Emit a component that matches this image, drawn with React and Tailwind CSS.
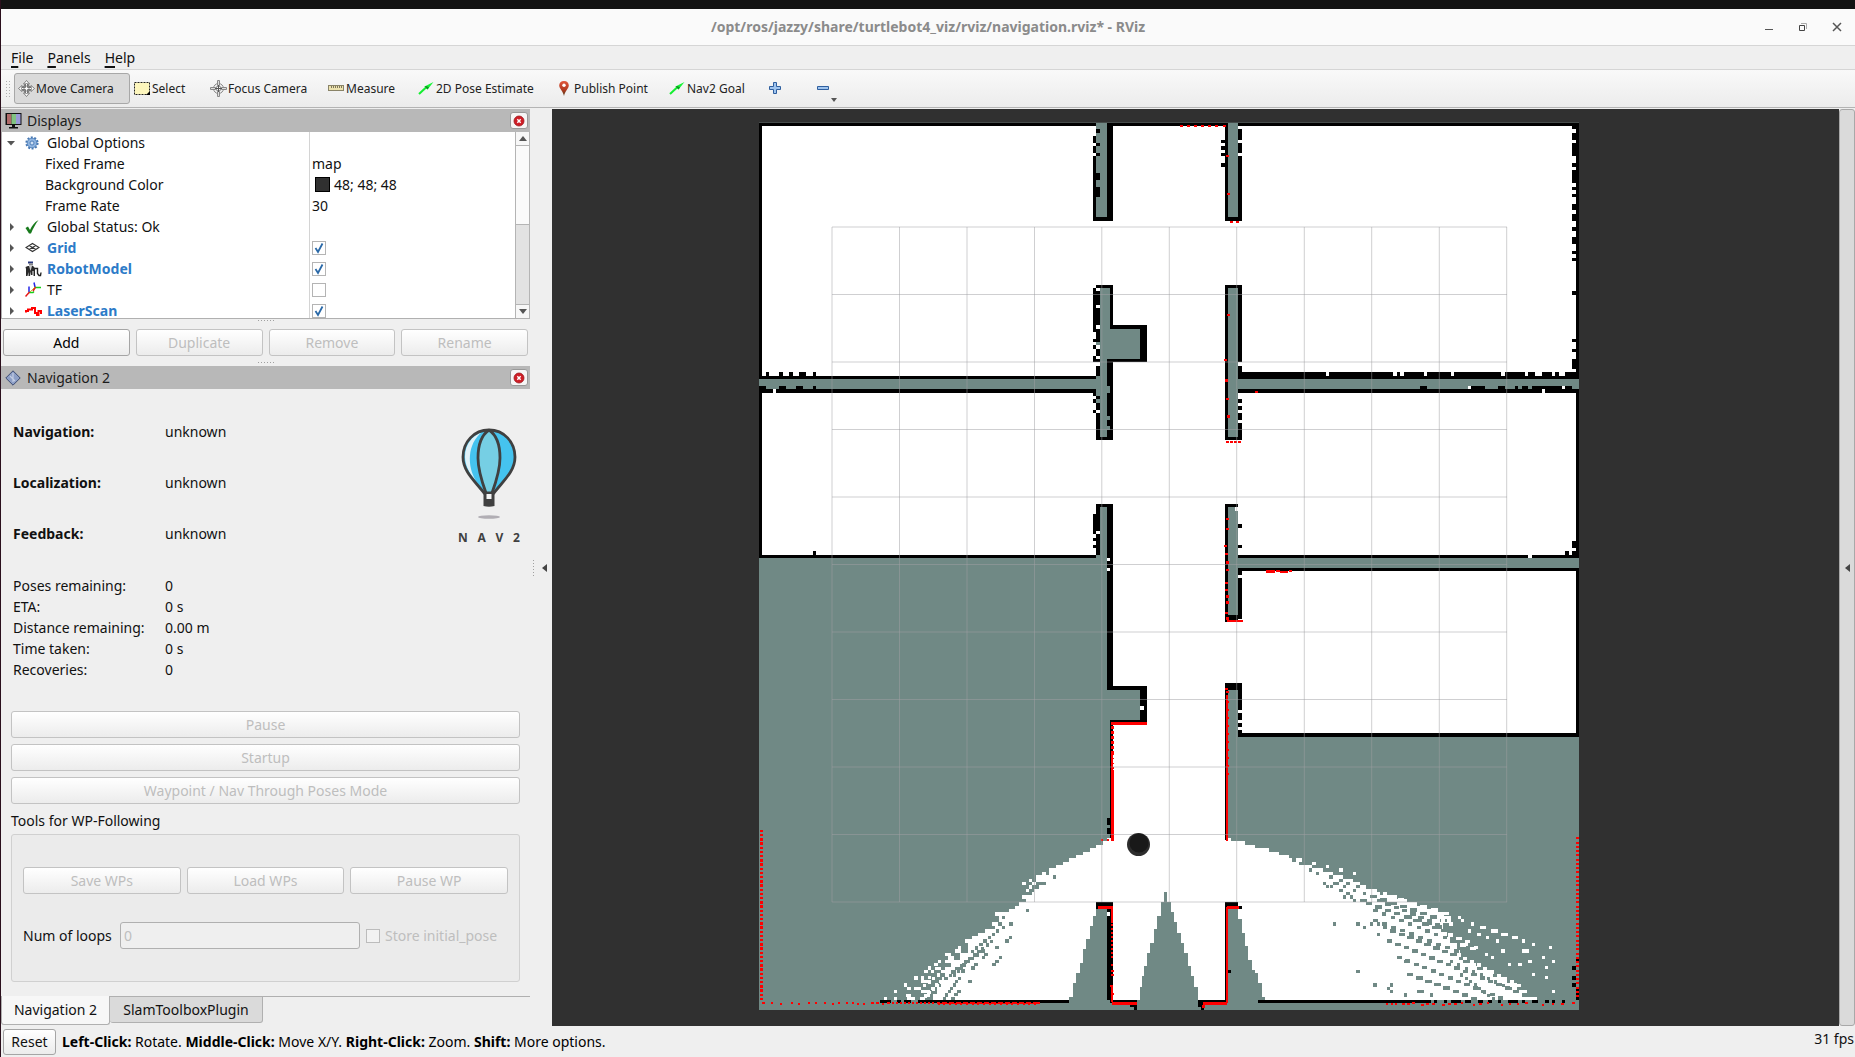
import React from "react";

/* ---------- map drawing helpers: units are thirds of a pixel inside a tile ---------- */

const TEAL = "#708985";

function toPath(list) {
  return list
    .trim()
    .split(/\s*,\s*/)
    .map((r) => {
      const [a, b, c, d] = r.split(" ").map(Number);
      return `M${a} ${b}H${c}V${d}H${a}Z`;
    })
    .join("");
}

function Cells({ fill, list }) {
  return <path d={toPath(list)} fill={fill} />;
}

function Tile({ x, y, children }) {
  return <g transform={`translate(${x} ${y}) scale(0.33333)`}>{children}</g>;
}

function column(x1, x2, spans) {
  return spans
    .split(" ")
    .map((s) => {
      const [a, b] = s.split("-");
      return `${x1} ${a} ${x2} ${b}`;
    })
    .join(",");
}

function row(y1, y2, spans) {
  return spans
    .split(" ")
    .map((s) => {
      const [a, b] = s.split("-");
      return `${a} ${y1} ${b} ${y2}`;
    })
    .join(",");
}

function Dots({ list, fill = "#ff0000", w = 9, h = 7 }) {
  const d = list
    .trim()
    .split(/\s*,\s*/)
    .map((p) => {
      const [x, y] = p.split(" ").map(Number);
      return `${x - w / 2} ${y - h / 2} ${x + w / 2} ${y + h / 2}`;
    })
    .join(",");
  return <path d={toPath(d)} fill={fill} />;
}

/* A diagonal run of dashes, one dash for every map row. */
function streak([x0, y0, x1, y1, cover = 0.8]) {
  const n = Math.max(1, Math.round((y1 - y0) / 10.1));
  const dx = (x1 - x0) / n;
  const out = [];
  for (let i = 0; i < n; i++) {
    const a = x0 + dx * i;
    const w = Math.max(9, Math.abs(dx) * cover);
    const y = y0 + i * 10.1;
    out.push(`${a} ${y} ${a + w} ${y + 10.1}`);
  }
  return out.join(",");
}

function Streaks({ fill, runs }) {
  return <path d={toPath(runs.map(streak).join(","))} fill={fill} />;
}

function series(x, y, dx, dy, n) {
  return Array.from({ length: n }, (_, i) => `${x + dx * i} ${y + dy * i}`).join(",");
}

/* White area bounded on one side by steps; [y, edge] pairs, last pair closes it. */
function steps(pairs, far) {
  const out = [];
  for (let i = 0; i < pairs.length - 1; i++) {
    const [y, e] = pairs[i];
    out.push(`${Math.min(e, far)} ${y} ${Math.max(e, far)} ${pairs[i + 1][0]}`);
  }
  return out.join(",");
}

const GRID_X = [832, 899.5, 967, 1034.5, 1101.8, 1169.3, 1236.7, 1304.3, 1371.7, 1439.3, 1506.7];
const GRID_Y = [227, 294.5, 362, 429.5, 497, 564.5, 632, 699.5, 767, 834.5, 902];

function MapView() {
  return (
    <svg
      viewBox="552 109 1287 917"
      preserveAspectRatio="xMidYMid slice"
      className="block h-full w-full"
      role="img"
      aria-label="Occupancy map with laser scan"
    >
      <g shapeRendering="crispEdges">
        <rect x="759" y="122" width="820" height="1" fill="#464c4b" />
        <rect x="759" y="123" width="820" height="887" fill={TEAL} />

        <Tile x={750} y={110}>
          <Cells fill="#fff" list="36 48 1260 1020" />
          <Cells fill={TEAL} list="27 807 1071 837,1038 39 1071 321,1050 534 1080 981,1038 798 1050 858,1038 837 1050 858" />
          <Cells
            fill="#000"
            list="27 39 1038 48,1071 39 1260 48,27 39 36 807,27 837 36 1020,36 798 1038 807,36 837 1038 849,1071 39 1089 333,1029 321 1089 333,1038 525 1089 534,1080 534 1089 657,1080 645 1191 657,1170 657 1191 756,1071 747 1191 756,1071 756 1089 990,1038 981 1089 990"
          />
          <Cells fill="#000" list={column(1029, 1038, "78-99 108-129 138-321 534-666 687-696 705-717 738-756 849-858 867-879 900-909")} />
          <Cells
            fill="#000"
            list={column(1038, 1050, "57-69 99-108 129-138 189-210 231-261 543-585 594-645 657-696 717-738 747-756 768-798 858-867 879-900 909-990")}
          />
          <Cells fill="#000" list={row(786, 798, "48-57 87-99 117-129 147-168 189-198")} />
          <Cells fill="#000" list={row(828, 837, "27-48 87-108 138-159 189-198")} />
          <Cells fill="#fff" list="69 837 78 849" />
          <Cells fill={TEAL} list="1071 657 1170 747,1071 828 1080 849,1071 918 1080 930,1071 948 1080 960,1038 696 1050 705,1038 867 1050 879" />
        </Tile>

        <Tile x={1160} y={110}>
          <Cells fill="#fff" list="0 48 1248 1020" />
          <Cells fill={TEAL} list="204 39 234 321,204 534 234 981,234 807 1257 837" />
          <Cells
            fill="#000"
            list="0 39 204 48,234 39 1257 48,1248 39 1257 807,1248 849 1257 1020,195 39 204 333,195 321 246 333,195 525 246 534,195 534 204 990,195 981 246 990,234 786 1257 807,234 837 1257 849"
          />
          <Cells fill="#000" list={column(234, 246, "57-90 99-129 138-321 534-756 768-786 867-879 888-900 909-930 939-981")} />
          <Cells fill="#000" list={column(183, 195, "90-99 108-120 129-138 159-171")} />
          <Cells
            fill="#000"
            list={column(1236, 1248, "48-57 69-90 99-138 159-171 180-219 231-240 252-261 282-300 312-333 351-363 381-402 423-432 444-453 543-555 687-696 717-726 747-777")}
          />
          <Cells fill="#fff" list={row(786, 798, "498-507 699-711 720-732 792-801 873-882 1023-1035 1095-1104 1125-1146 1176-1185 1197-1215")} />
          <Cells fill="#000" list={row(828, 837, "780-801 933-975 1014-1035 1065-1074 1086-1104 1116-1206 1215-1236")} />
          <Cells fill="#fff" list="924 828 933 837,1206 828 1215 837,1146 837 1155 849,1236 777 1248 786" />
          <Dots list="66 48,87 48,108 48,129 48,150 48,171 48,193 48,202 138,207 253,214 336,233 337,205 616,197 751,200 812,203 868,205 920,291 847,202 996,214 996,226 996,239 996" />
        </Tile>

        <Tile x={750} y={440}>
          <Cells fill="#fff" list="36 0 1038 345,1038 0 1260 192,1089 192 1260 1020" />
          <Cells
            fill="#000"
            list="27 0 36 354,36 345 1038 354,189 333 198 345,1038 192 1089 201,1071 201 1089 750,1038 201 1050 345,1029 222 1038 282,1029 294 1038 303,1029 315 1038 324,1071 738 1191 750,1080 840 1191 850,1080 849 1089 1020"
          />
          <Cells fill={TEAL} list="1071 750 1170 840" />
          <Cells fill="#000" list="1170 750 1191 848" />
          <Cells fill="#fff" list="1038 273 1050 282,1071 354 1080 363,1071 384 1080 393,1170 798 1182 810" />
          <Cells fill="#f00" list="1083 846 1191 855,1083 938 1089 1020" />
          <Dots list={series(1087, 862, 0, 15, 6)} w={8} h={8} />
          <Dots list={series(1091, 942, 0, 14, 6)} w={3} h={4} />
        </Tile>

        <Tile x={1160} y={440}>
          <Cells fill="#fff" list="0 0 1248 345,0 345 195 1020,246 393 1248 879,195 546 246 729,234 393 246 879" />
          <Cells fill={TEAL} list="204 201 234 525,234 354 1257 384,204 750 234 891" />
          <Cells
            fill="#000"
            list="1248 0 1257 354,1248 384 1257 891,195 192 234 201,195 201 204 546,195 525 246 537,195 537 234 546,234 345 1257 354,234 384 1257 393,195 729 246 750,195 750 204 1020,234 879 1257 891,1236 303 1248 324,1215 333 1227 345,1236 333 1248 345"
          />
          <Cells fill="#000" list={column(234, 246, "252-264 315-324 393-405 414-525 750-810 819-840 849-861 870-879")} />
          <Cells fill="#fff" list="225 201 234 213,1104 345 1116 354" />
          <Cells fill="#f00" list="202 540 249 546,198 765 204 1020,318 391 345 398,348 391 360 396,360 393 375 399" />
          <Dots list="202 5,214 5,226 5,239 5,202 238,203 267,198 319,201 343,203 368,203 391,199 430,201 451,203 470,203 488,199 520,202 536,201 748,203 757,381 396,393 394" />
          <Dots list={series(205, 786, 0, 24, 10)} w={4} h={5} />
        </Tile>

        <Tile x={750} y={770}>
          <Cells fill="#fff" list="1089 0 1260 690" />
          <Cells
            fill="#fff"
            list={steps(
              [
                [204, 1071], [213, 1059], [225, 1038], [234, 1020], [246, 999], [255, 978], [264, 957], [276, 939],
                [285, 918], [294, 897], [315, 867], [327, 858], [336, 888], [345, 867], [357, 852], [366, 846],
                [375, 828], [396, 807], [408, 795], [417, 777], [426, 765], [447, 747], [468, 735], [478, 720],
                [489, 702], [498, 684], [508, 666], [528, 654], [549, 630], [570, 603], [590, 585], [630, 573],
                [651, 561], [672, 549], [690, 0],
              ],
              1089
            )}
          />
          <Cells
            fill="#fff"
            list="876 306 888 315,858 315 867 327,816 336 828 345,837 327 846 336,846 336 858 345,837 345 846 357,828 357 837 366,816 375 828 387,735 426 765 438,747 438 757 447,726 456 747 468,705 478 720 489,684 489 702 498,666 498 690 508,645 508 666 518,654 518 666 528,624 528 633 537,615 537 633 549,585 549 603 558,594 558 612 570,564 570 573 579,585 570 603 579,552 579 564 588,534 588 543 600,522 600 534 609,543 600 552 609,555 590 573 600,534 618 543 627,492 618 504 630,513 618 522 630,513 630 534 639,462 639 471 651,471 651 483 660,492 651 513 660,432 660 441 669,468 672 483 681,402 681 411 690,432 681 441 690,471 681 495 690,510 681 525 690,513 660 534 669,525 672 540 681"
          />
          <Streaks fill="#fff" runs={[[630, 560, 505, 650, 0.7], [612, 590, 520, 670, 0.7], [594, 612, 510, 680, 0.6]]} />
          <Streaks
            fill={TEAL}
            runs={[[738, 478, 650, 550, 0.8], [720, 510, 590, 610, 0.7], [690, 540, 570, 630, 0.7], [640, 580, 600, 620, 0.6], [624, 620, 570, 690, 0.7]]}
          />
          <Dots
            fill={TEAL}
            w={10}
            h={10}
            list="913 321,873 340,882 340,832 421,783 462,760 472,750 462,781 502,771 513,741 532,700 543,708 553,751 563,700 563,741 574,678 583,732 583,669 594,639 603,660 634,627 664,618 674,609 685"
          />
          <Cells
            fill={TEAL}
            list={steps(
              [[417, 1038], [438, 1029], [468, 1020], [507, 1008], [537, 999], [579, 990], [609, 978], [639, 969], [681, 957], [690, 0]],
              1071
            )}
          />
          <Cells
            fill="#000"
            list="1080 0 1089 204,1071 144 1080 165,1071 174 1080 192,1038 396 1089 417,1071 417 1089 690,1080 690 1161 699,504 690 957 699,390 690 423 699,441 690 453 699,462 690 483 699,1140 705 1161 711,1152 711 1161 720"
          />
          <Cells fill="#fff" list="1071 426 1080 438" />
          <Cells fill="#f00" list="1083 0 1091 213,1044 408 1089 417,1083 417 1089 460,1086 696 1161 705,1083 650 1088 696" />
          <Dots list="1056 210,1074 210" w={6} h={6} />
          <Dots list={series(1086, 466, 0, 12, 9)} w={8} h={6} />
          <Dots list="1086 586,1087 602,1087 615,1085 648,1087 672" w={8} h={6} />
          <Dots list={series(34, 183, 0, 12.6, 41)} w={9} h={7} />
          <Dots list="41 699,67 700,93 702,126 699,148 702,178 699,198 700,226 699,249 702,268 700,292 700,310 699,325 702,343 702,368 699,383 699,399 702,416 699" w={7} h={6} />
          <Dots list={series(430, 700, 12, 0, 11)} w={7} h={6} />
          <Cells fill="#f00" list="560 697 870 703" />
          <Dots list={series(566, 703, 17, 0, 18)} w={6} h={5} />
          <Dots fill="#000" list={series(572, 697, 21, 0, 14)} w={6} h={3} />
        </Tile>

        <Tile x={1160} y={770}>
          <Cells fill="#fff" list="0 0 195 690" />
          <Cells
            fill="#fff"
            list={steps(
              [
                [204, 213], [213, 255], [225, 285], [234, 327], [246, 357], [255, 387], [264, 396], [276, 417],
                [285, 456], [294, 489], [306, 519], [315, 549], [327, 580], [336, 600], [345, 618], [357, 651],
                [366, 660], [375, 711], [387, 741], [396, 771], [408, 801], [417, 822], [426, 852], [438, 873],
                [447, 873], [460, 850], [480, 860], [500, 870], [520, 890], [540, 900], [560, 910], [580, 950],
                [600, 1000], [620, 1040], [640, 1070], [660, 1100], [680, 1130], [690, 0],
              ],
              195
            )}
          />
          <Cells fill="#fff" list="408 264 426 276,456 276 468 285,498 285 507 294,537 294 549 306,579 306 588 315,669 366 681 375" />
          <Streaks
            fill={TEAL}
            runs={[
              [630, 375, 900, 468, 0.7], [651, 387, 850, 468, 0.65], [618, 396, 900, 498, 0.65],
              [640, 417, 900, 520, 0.5], [640, 447, 910, 545, 0.5], [690, 478, 1000, 600, 0.75], [681, 508, 1110, 680, 0.65],
              [711, 558, 1040, 690, 0.6], [741, 609, 960, 690, 0.7], [740, 436, 920, 500, 0.5], [870, 570, 1070, 660, 0.4],
              [900, 610, 1010, 690, 0.4],
            ]}
          />
          <Streaks
            fill="#fff"
            runs={[
              [680, 375, 880, 438, 0.6], [864, 490, 940, 520, 0.6], [870, 540, 1090, 650, 0.6], [900, 520, 960, 545, 0.6],
              [843, 447, 890, 468, 0.5],
            ]}
          />
          <Dots
            fill={TEAL}
            w={10}
            h={10}
            list="401 270,423 280,451 300,473 310,513 321,543 331,493 340,524 340,533 340,564 340,503 350,514 350,553 350,594 350,543 361,584 361,564 370,613 370,553 381,575 381,584 391,604 391,615 391,523 462,594 462,613 472,634 462,656 462,675 472,656 493,686 513,716 563,737 574,594 604,645 645,694 645,686 655,694 664,737 675,786 664,776 664,815 675"
          />
          <Dots
            fill="#fff"
            w={10}
            h={10}
            list="898 442,907 452,937 462,964 472,973 472,998 483,1008 483,957 493,928 483,1029 493,1039 493,983 503,1060 503,1070 503,1013 513,1090 513,1120 523,1171 533,1029 543,1091 543,1101 543,980 553,997 563,1150 563,1110 574,1180 574,1048 583,1080 583,1160 593,1120 613,1160 623,1180 664,920 523,948 533"
          />
          <Cells
            fill={TEAL}
            list="12 366 21 396,3 396 33 426,3 426 42 438,-9 438 42 456,-9 456 51 477,-18 477 51 489,-18 489 63 519,-30 519 72 549,-39 549 84 588,-48 588 93 618,-55 618 102 651,-60 651 114 690"
          />
          <Cells
            fill={TEAL}
            list="204 417 234 447,204 447 246 489,204 489 255 528,204 528 264 570,204 570 276 600,204 600 285 609,204 609 294 639,204 639 306 681,204 681 315 690"
          />
          <Cells
            fill="#000"
            list="195 0 204 210,195 396 234 417,234 408 246 417,195 417 204 690,204 600 213 609,114 690 204 699,114 699 129 711,123 711 132 720,294 690 813 699,822 690 831 699,852 690 861 699,873 690 903 699,915 690 933 699,954 690 969 699,984 690 996 699,1014 690 1023 699,1044 690 1074 699,1086 690 1095 699,1116 690 1134 699,1155 690 1167 699,1176 690 1185 699,1206 690 1215 699,1248 564 1257 573,1248 650 1257 690"
          />
          <Cells fill="#000" list={column(1236, 1248, "588-600 618-630 639-651")} />
          <Cells fill="#f00" list="198 0 204 213,202 408 237 416,198 412 204 700,129 696 202 705,126 705 134 713" />
          <Dots list={series(1253, 205, 0, 12.8, 38)} w={9} h={6} />
          <Dots
            list="681 703,696 701,708 701,731 703,745 701,760 699,787 704,802 702,820 701,850 704,868 702,886 702,906 699,942 704,962 702,984 700,1026 706,1050 703,1074 701,1100 699,1149 706,1179 703,1208 701,1240 698"
            w={8}
            h={6}
          />
        </Tile>
      </g>

      <g stroke="#a0a0a4" strokeOpacity="0.5" strokeWidth="1">
        {GRID_X.map((x) => (
          <line key={x} x1={x} x2={x} y1="227" y2="902" />
        ))}
        {GRID_Y.map((y) => (
          <line key={y} x1="832" x2="1507" y1={y} y2={y} />
        ))}
      </g>

      <circle cx="1138.5" cy="844.5" r="11.5" fill="#2d2d2d" />
      <circle cx="1139" cy="843" r="9.5" fill="#191919" />
    </svg>
  );
}

/* ---------- icons ---------- */

const MoveIcon = () => (
  <svg width="17" height="17" viewBox="0 0 17 17" fill="#fff" stroke="#666" strokeWidth="0.8">
    <path d="M8.5 0.500 11.500 4H9.500v3.500H13V5.500l3.500 3-3.500 3V9.500H9.500V13h2l-3 3.500L5.500 13h2V9.500H4v2l-3.500-3 3.500-3v2h3.500V4h-2Z" />
    <ellipse cx="8.500" cy="8.500" rx="5" ry="2.500" fill="none" />
    <ellipse cx="8.500" cy="8.500" rx="2.500" ry="5" fill="none" />
  </svg>
);

const SelectIcon = () => (
  <svg width="17" height="15" viewBox="0 0 17 15">
    <rect x="0.500" y="1.500" width="15" height="12" fill="#fdf6bd" stroke="#222" strokeDasharray="2 1" />
    <path d="M16 10v4h-4Z" fill="#000" />
  </svg>
);

const FocusIcon = () => (
  <svg width="17" height="17" viewBox="0 0 17 17" fill="none" stroke="#888" strokeWidth="1">
    <circle cx="8.500" cy="8.500" r="5" />
    <circle cx="8.500" cy="8.500" r="2.500" />
    <path d="M7.500 0.500h2v5h-2zM7.500 11.500h2v5h-2zM0.500 7.500h5v2h-5zM11.500 7.500h5v2h-5z" fill="#ddd" />
    <path d="M8.500 5v7M5 8.500h7" stroke="#555" />
  </svg>
);

const RulerIcon = () => (
  <svg width="17" height="15" viewBox="0 0 17 15">
    <rect x="0.500" y="4.500" width="15" height="5" fill="#ece2ae" stroke="#8a8468" />
    <path d="M3.500 5v2M5.500 5v2M7.500 5v2M9.500 5v2M11.500 5v2M13.500 5v2" stroke="#7d775c" />
  </svg>
);

const ArrowIcon = () => (
  <svg width="17" height="15" viewBox="0 0 17 15">
    <path d="M1 13 8 6.500" stroke="#12ef2f" strokeWidth="2" />
    <path d="M15.500 1 6.500 5.500l3 3Z" fill="#16f336" />
    <path d="m6.500 5.500 3 3L11 6.500 8.500 5Z" fill="#0c9a20" />
  </svg>
);

const PinIcon = () => (
  <svg width="17" height="17" viewBox="0 0 17 17">
    <defs>
      <linearGradient id="pin" x1="0" y1="0" x2="0" y2="1">
        <stop offset="0" stopColor="#e2573b" />
        <stop offset="0.6" stopColor="#b03a20" />
        <stop offset="1" stopColor="#4d3a18" />
      </linearGradient>
    </defs>
    <path d="M8 1C5 1 3.200 3 3.200 5.500 3.200 8.500 7 11 8 16c1-5 4.800-7.500 4.800-10.500C12.800 3 11 1 8 1Z" fill="url(#pin)" />
    <circle cx="8" cy="5.200" r="1.700" fill="#fff" />
  </svg>
);

const PlusIcon = () => (
  <svg width="13" height="13" viewBox="0 0 13 13">
    <path d="M4.500 0.500h3v4h4v3h-4v4h-3v-4h-4v-3h4z" fill="#9fc4ee" stroke="#2f5f9f" />
  </svg>
);

const MinusIcon = () => (
  <svg width="13" height="5" viewBox="0 0 13 5">
    <path d="M0.500 0.500h11v3h-11z" fill="#9fc4ee" stroke="#2f5f9f" />
  </svg>
);

const MonitorIcon = () => (
  <svg width="17" height="17" viewBox="0 0 17 17">
    <rect x="0.500" y="1" width="16" height="12" fill="#111" />
    <rect x="2" y="2" width="4.500" height="10" fill="#b06a6a" />
    <rect x="6.500" y="2" width="4.500" height="10" fill="#82c482" />
    <rect x="11" y="2" width="4.500" height="10" fill="#9a9ad8" />
    <path d="M7 13h3v2H7zM4 15h9v1.500H4z" fill="#111" />
  </svg>
);

const DiamondIcon = () => (
  <svg width="16" height="16" viewBox="0 0 16 16">
    <path d="M8 0.800 15.200 8 8 15.200 0.800 8Z" fill="#8d9fc6" stroke="#3c4a70" />
    <path d="M8 3v9M5 6l5 5" stroke="#c3cde4" strokeWidth="1.200" />
  </svg>
);

const GearIcon = () => (
  <svg width="14" height="14" viewBox="0 0 14 14">
    <circle cx="7" cy="7" r="5.600" fill="none" stroke="#4678b4" strokeWidth="2" strokeDasharray="2 1.500" />
    <circle cx="7" cy="7" r="4.800" fill="#8fb4e0" stroke="#4678b4" strokeWidth="0.800" />
    <circle cx="7" cy="7" r="2" fill="#cfe0f4" stroke="#4678b4" strokeWidth="0.900" />
  </svg>
);

const CheckIcon = () => (
  <svg width="14" height="14" viewBox="0 0 14 14">
    <path d="M0.500 8 3 6.500l2 3.500C7 6 9 2.500 13.500 0 10.500 4 8 8.500 6 13.500H4Z" fill="#187a1c" />
  </svg>
);

const GridIcon = () => (
  <svg width="15" height="14" viewBox="0 0 15 14" fill="none" stroke="#333" strokeWidth="1.200">
    <path d="M7.500 2.500 14 6.500l-6.500 4-6.500-4ZM4.200 4.500l6.500 4M10.800 4.500l-6.500 4" />
  </svg>
);

const RobotIcon = () => (
  <svg width="17" height="17" viewBox="0 0 17 17">
    <path d="M3 1.500h5v2H3z" fill="#26367c" />
    <path d="M4 3.500h4v2H4z" fill="#888" />
    <path d="M0.500 7 3 6h5l2 2v8H8.500v-5h-1v4H6v-4l-1 5H3.500v-4L2.500 16H1V9Z" fill="#2a2a2a" />
    <path d="M4 6h3L5.500 11Z" fill="#ccc" />
    <path d="M10 8.500h2.500v5l1.500 2h1.500l0.500-3" fill="none" stroke="#222" strokeWidth="1.400" />
  </svg>
);

const TfIcon = () => (
  <svg width="17" height="15" viewBox="0 0 17 15" fill="none" strokeWidth="1.500">
    <path d="M4 10V4.500M10 5 9 0.500" stroke="#2525e8" />
    <path d="M4 10.500h4l1-1M10 5.500h6" stroke="#17cf17" />
    <path d="m0.500 14.500 4-4.500M8 9l2.500-4" stroke="#e81717" />
    <path d="m5 10 5-5" stroke="#c59a10" strokeWidth="0.800" />
  </svg>
);

const LaserIcon = () => (
  <svg width="17" height="12" viewBox="0 0 17 12" fill="none" stroke="#f00" strokeWidth="2">
    <path d="M1 7.500V6h2V4.500h4V3h3v5h2v2h1.500V6H16v3" />
  </svg>
);

const Balloon = () => (
  <svg width="58" height="94" viewBox="0 0 58 94" role="img" aria-label="Nav2 balloon">
    <path d="M29 2C14 2 3 14 3 29c0 15 13 25 21 36h10c8-11 21-21 21-36C55 14 44 2 29 2Z" fill="#45c3ef" />
    <path d="M22 4C12 8 5 16 5 29c0 9 5 17 11 24C7 38 7 16 22 4Z" fill="#dff1f8" />
    <path d="M29 2C20 8 18 18 18 30s4 24 8 35h6c4-11 8-23 8-35S38 8 29 2Z" fill="#76cfe4" />
    <g fill="none" stroke="#404040" strokeWidth="2.800">
      <path d="M29 2C14 2 3 14 3 29c0 15 13 25 21 36h10c8-11 21-21 21-36C55 14 44 2 29 2Z" />
      <path d="M29 2C20 8 18 18 18 30s4 24 8 35M29 2c9 6 11 16 11 28s-4 24-8 35" />
    </g>
    <path d="M23.500 64h11v14q-5.500 1.500-11 0z" fill="#404040" />
    <rect x="26.500" y="66" width="5" height="5" fill="#f4f4f4" />
    <ellipse cx="29" cy="89" rx="11" ry="1.800" fill="#b1aeb4" />
  </svg>
);

/* ---------- controls ---------- */

const btnBase = "rounded-[3px] border bg-linear-to-b from-white to-[#ececec] text-center leading-5";

function PushButton({ children, disabled, className = "" }) {
  return (
    <button
      type="button"
      disabled={disabled}
      className={`${btnBase} h-[27px] ${disabled ? "border-[#c3c3c3] text-[#bebebe]" : "border-[#a5a5a5] text-black"} ${className}`}
    >
      {children}
    </button>
  );
}

function ToolButton({ icon, label, active, className }) {
  return (
    <button
      type="button"
      className={`flex h-[31px] shrink-0 items-center gap-px whitespace-nowrap rounded-[3px] border pl-[3px] text-[12px] text-[#222] ${
        active ? "border-[#a8a8a8] bg-[#dadada]" : "border-transparent"
      } ${className}`}
    >
      {icon}
      {label}
    </button>
  );
}

function PanelTitle({ icon, title }) {
  return (
    <div className="flex h-[23px] shrink-0 items-center bg-[#b8b8b8] pl-1 pr-[2px] text-[#1c1c1c]">
      <span className="flex w-[22px] items-center">{icon}</span>
      <h2 className="flex-1">{title}</h2>
      <button type="button" aria-label={`Close ${title}`} className="flex h-[17px] w-[18px] items-center justify-center rounded-[3px] border border-[#999] bg-[#f6f6f6]">
        <svg width="12" height="12" viewBox="0 0 12 12">
          <circle cx="6" cy="6" r="5" fill="#cf1d26" stroke="#9c1a1f" strokeWidth="0.800" />
          <path d="m4.300 4.300 3.400 3.400M7.700 4.300 4.300 7.700" stroke="#fff" strokeWidth="1.400" />
        </svg>
      </button>
    </div>
  );
}

function TickBox({ checked, label }) {
  return (
    <span className="relative block size-[14px]">
      <input
        type="checkbox"
        aria-label={label}
        defaultChecked={checked}
        className="peer block size-[14px] appearance-none border border-[#b4b4b4] bg-white"
      />
      <svg className="pointer-events-none absolute inset-0 hidden peer-checked:block" width="14" height="14" viewBox="0 0 14 14" fill="none">
        <path d="M3.500 7 6 11l4.500-8.500" stroke="#2a69a8" strokeWidth="1.800" />
      </svg>
    </span>
  );
}

function Grip() {
  return (
    <div className="flex h-[2px] w-4 justify-between self-center" aria-hidden="true">
      {[0, 1, 2, 3, 4, 5].map((i) => (
        <span key={i} className="size-px bg-[#a0a0a0]" />
      ))}
    </div>
  );
}

const TREE = [
  { label: "Global Options", icon: <GearIcon />, open: true },
  { label: "Fixed Frame", value: "map" },
  { label: "Background Color", value: "48; 48; 48", swatch: true },
  { label: "Frame Rate", value: "30" },
  { label: "Global Status: Ok", icon: <CheckIcon />, open: false },
  { label: "Grid", icon: <GridIcon />, open: false, on: true },
  { label: "RobotModel", icon: <RobotIcon />, open: false, on: true },
  { label: "TF", icon: <TfIcon />, open: false, on: false },
  { label: "LaserScan", icon: <LaserIcon />, open: false, on: true },
];

function TreeRow({ item }) {
  const top = item.icon !== undefined;
  return (
    <div className="flex h-[21px] shrink-0" role="treeitem" aria-selected="false">
      <div className="flex w-[308px] shrink-0 items-center border-r border-[#d4d4d4]">
        {top ? (
          <>
            <svg width="10" height="8" viewBox="0 0 10 8" className="ml-1 shrink-0" fill="#555">
              {item.open ? <path d="M1 2h8L5 6.500Z" /> : <path d="M4 0v8l4-4Z" />}
            </svg>
            <span className="ml-[9px] flex w-[22px] items-center">{item.icon}</span>
          </>
        ) : (
          <span className="w-[43px]" />
        )}
        <span className={item.on ? "font-bold text-[#2c7bc8]" : ""}>{item.label}</span>
      </div>
      <div className="flex items-center pl-[2px]">
        {item.on !== undefined && <TickBox checked={item.on} label={item.label} />}
        {item.swatch && <span className="mr-1 ml-[3px] size-[15px] border border-black bg-[#303030]" />}
        {item.value}
      </div>
    </div>
  );
}

function DisplaysPanel() {
  return (
    <section className="flex shrink-0 flex-col">
      <PanelTitle title="Displays" icon={<MonitorIcon />} />
      <div className="flex h-[187px] border-b border-l border-[#b0b0b0] bg-white">
        <div className="flex min-w-0 flex-1 flex-col overflow-hidden" role="tree">
          {TREE.map((item) => (
            <TreeRow key={item.label} item={item} />
          ))}
        </div>
        <div className="flex w-[15px] flex-col border-x border-[#b4b4b4] bg-[#e2e2e2]">
          <div className="flex h-[14px] items-center justify-center border-b border-[#b4b4b4] bg-[#f7f7f7]">
            <svg width="8" height="5" viewBox="0 0 8 5" fill="#555"><path d="M0 5 4 0l4 5Z" /></svg>
          </div>
          <div className="h-[79px] border-b border-[#b4b4b4] bg-[#fafafa]" />
          <div className="flex-1" />
          <div className="flex h-[14px] items-center justify-center border-t border-[#b4b4b4] bg-[#f7f7f7]">
            <svg width="8" height="5" viewBox="0 0 8 5" fill="#555"><path d="m0 0 4 5 4-5Z" /></svg>
          </div>
        </div>
      </div>
      <div className="mt-px flex flex-col"><Grip /></div>
      <div className="mt-[7px] flex gap-[6px] px-[2px]">
        <PushButton className="flex-1">Add</PushButton>
        <PushButton className="flex-1" disabled>Duplicate</PushButton>
        <PushButton className="flex-1" disabled>Remove</PushButton>
        <PushButton className="flex-1" disabled>Rename</PushButton>
      </div>
      <div className="mt-[6px] mb-[2px] flex flex-col"><Grip /></div>
    </section>
  );
}

const STATES = ["Navigation:", "Localization:", "Feedback:"];
const STATS = [
  ["Poses remaining:", "0"],
  ["ETA:", "0 s"],
  ["Distance remaining:", "0.00 m"],
  ["Time taken:", "0 s"],
  ["Recoveries:", "0"],
];

function NavigationPanel() {
  return (
    <section className="flex min-h-0 flex-1 flex-col">
      <PanelTitle title="Navigation 2" icon={<DiamondIcon />} />
      <div className="flex flex-1 flex-col px-[10px]">
        <div className="mt-[17px] flex">
          <table className="w-[300px] text-left">
            <tbody>
              {STATES.map((s) => (
                <tr key={s} className="h-[51px]">
                  <th className="w-[154px] pl-[2px] font-bold">{s}</th>
                  <td>unknown</td>
                </tr>
              ))}
            </tbody>
          </table>
          <div className="ml-auto mt-[22px] flex w-[62px] flex-col items-center text-[#404040]">
            <Balloon />
            <div className="mt-[6px] flex w-full justify-between text-[12px] font-bold leading-5">
              <span>N</span>
              <span>A</span>
              <span>V</span>
              <span>2</span>
            </div>
          </div>
        </div>
        <table className="mt-[16px] w-[300px] text-left">
          <tbody>
            {STATS.map(([k, v]) => (
              <tr key={k} className="h-[21px]">
                <th className="w-[154px] whitespace-nowrap pl-[2px] font-normal">{k}</th>
                <td>{v}</td>
              </tr>
            ))}
          </tbody>
        </table>
        <div className="mt-[31px] flex flex-col gap-[6px]">
          <PushButton disabled>Pause</PushButton>
          <PushButton disabled>Startup</PushButton>
          <PushButton disabled>Waypoint / Nav Through Poses Mode</PushButton>
        </div>
        <h3 className="mt-[7px] leading-5">Tools for WP-Following</h3>
        <div className="mt-[3px] flex flex-col gap-[28px] rounded-[3px] border border-[#d0d0d0] bg-[#ebebeb] px-[11px] py-[32px]">
          <div className="flex gap-[6px]">
            <PushButton className="flex-1" disabled>Save WPs</PushButton>
            <PushButton className="flex-1" disabled>Load WPs</PushButton>
            <PushButton className="flex-1" disabled>Pause WP</PushButton>
          </div>
          <div className="flex items-center">
            <label htmlFor="loops" className="w-[97px]">Num of loops</label>
            <input id="loops" disabled defaultValue="0" className="h-[27px] w-0 flex-1 rounded-[3px] border border-[#b0b0b0] bg-[#efefef] px-[3px] text-[#bebebe]" />
            <label className="ml-[6px] flex w-[142px] items-center gap-[5px] whitespace-nowrap text-[#bebebe]">
              <input type="checkbox" disabled className="size-[14px] shrink-0 appearance-none border border-[#bcbcbc] bg-[#f2f2f2]" />
              Store initial_pose
            </label>
          </div>
        </div>
      </div>
      <div className="flex h-[30px] shrink-0 items-start" role="tablist">
        <button type="button" role="tab" aria-selected="true" className="h-[29px] w-[109px] rounded-b-[3px] border border-t-0 border-[#b0b0b0] bg-[#f7f7f7] pb-px">
          Navigation 2
        </button>
        <button type="button" role="tab" aria-selected="false" className="h-[27px] w-[153px] rounded-b-[3px] border border-l-0 border-[#b0b0b0] bg-[#dadada] pb-px">
          SlamToolboxPlugin
        </button>
        <div className="flex-1 border-t border-[#b0b0b0]" />
      </div>
    </section>
  );
}

const LeftTriangle = () => (
  <svg width="5" height="8" viewBox="0 0 5 8" fill="#444"><path d="M5 0v8L0 4Z" /></svg>
);

export default function App() {
  return (
    <div className="flex h-screen min-h-[1040px] flex-col overflow-hidden border-l border-[#2a0f1c] bg-[#efefef] font-['Noto_Sans',sans-serif] text-[14px] leading-[21px] text-[#111]">
      <div className="h-[9px] shrink-0 bg-[#131313]" />
      <header className="grid h-[37px] shrink-0 grid-cols-[1fr_auto_1fr] items-center border-b border-[#d5d5d5] bg-[#fafafa]">
        <span />
        <h1 className="pb-px text-[14px] font-bold text-[#8b8b8b]">/opt/ros/jazzy/share/turtlebot4_viz/rviz/navigation.rviz* - RViz</h1>
        <div className="flex items-center justify-end gap-[10px] pr-[6px]">
          <button type="button" aria-label="Minimize" className="flex size-6 items-center justify-center">
            <svg width="10" height="10" viewBox="0 0 10 10"><path d="M1 7.500h8" stroke="#555" /></svg>
          </button>
          <button type="button" aria-label="Restore" className="flex size-6 items-center justify-center">
            <svg width="10" height="10" viewBox="0 0 10 10" fill="none"><path d="M1.500 3.500h5v5h-5z" stroke="#444" /><path d="M3 1.500h5.500V7" stroke="#aaa" /></svg>
          </button>
          <button type="button" aria-label="Close" className="flex size-6 items-center justify-center">
            <svg width="10" height="10" viewBox="0 0 10 10"><path d="m1 1 8 8M9 1 1 9" stroke="#555" strokeWidth="1.500" /></svg>
          </button>
        </div>
      </header>
      <nav className="flex h-6 shrink-0 items-center gap-[14px] border-b border-[#d5d5d5] pl-[10px]">
        {["File", "Panels", "Help"].map((m) => (
          <button key={m} type="button">
            <span className="underline decoration-2 underline-offset-3">{m[0]}</span>
            {m.slice(1)}
          </button>
        ))}
      </nav>
      <div className="flex h-[38px] shrink-0 items-center border-b border-[#b4b4b4] bg-linear-to-b from-[#f9f9f9] to-[#ececec]" role="toolbar">
        <div className="mr-[3px] ml-[5px] grid grid-cols-2 gap-[2px]" aria-hidden="true">
          {Array.from({ length: 12 }, (_, i) => (
            <span key={i} className="size-px bg-[#b0b0b0]" />
          ))}
        </div>
        <span className="w-px" />
        <ToolButton className="w-[116px]" active icon={<MoveIcon />} label="Move Camera" />
        <ToolButton className="w-[76px]" icon={<SelectIcon />} label="Select" />
        <ToolButton className="w-[118px]" icon={<FocusIcon />} label="Focus Camera" />
        <ToolButton className="w-[90px]" icon={<RulerIcon />} label="Measure" />
        <ToolButton className="w-[138px]" icon={<ArrowIcon />} label="2D Pose Estimate" />
        <ToolButton className="w-[113px]" icon={<PinIcon />} label="Publish Point" />
        <ToolButton className="w-[86px]" icon={<ArrowIcon />} label="Nav2 Goal" />
        <button type="button" aria-label="Add tool" className="flex h-[31px] w-12 items-center justify-center"><PlusIcon /></button>
        <button type="button" aria-label="Remove tool" className="relative flex h-[31px] w-12 items-center justify-center">
          <MinusIcon />
          <svg className="absolute right-[10px] bottom-[2px]" width="6" height="4" viewBox="0 0 6 4" fill="#555"><path d="M0 0h6L3 4Z" /></svg>
        </button>
      </div>
      <div className="mt-px flex min-h-0 flex-1">
        <aside className="flex w-[529px] shrink-0 flex-col">
          <DisplaysPanel />
          <NavigationPanel />
        </aside>
        <div className="flex w-[22px] shrink-0 items-center justify-between px-[3px]">
          <div className="flex flex-col gap-[2px]" aria-hidden="true">
            {[0, 1, 2, 3, 4, 5].map((i) => (
              <span key={i} className="size-px bg-[#a0a0a0]" />
            ))}
          </div>
          <button type="button" aria-label="Hide left dock" className="pr-[2px]"><LeftTriangle /></button>
        </div>
        <main className="min-w-0 flex-1 bg-[#303030]">
          <MapView />
        </main>
        <button type="button" aria-label="Hide right dock" className="flex w-4 shrink-0 items-center justify-center rounded-[3px] border border-[#a8a8a8] bg-[#dadada]">
          <LeftTriangle />
        </button>
      </div>
      <footer className="flex h-[31px] shrink-0 items-center pl-[2px] pr-px">
        <button type="button" className={`${btnBase} h-[26px] w-[53px] border-[#a5a5a5]`}>Reset</button>
        <p className="ml-[6px] flex-1 text-black">
          <b>Left-Click:</b> Rotate. <b>Middle-Click:</b> Move X/Y. <b>Right-Click:</b> Zoom. <b>Shift:</b> More options.
        </p>
        <span className="mb-[6px]">31 fps</span>
      </footer>
    </div>
  );
}
